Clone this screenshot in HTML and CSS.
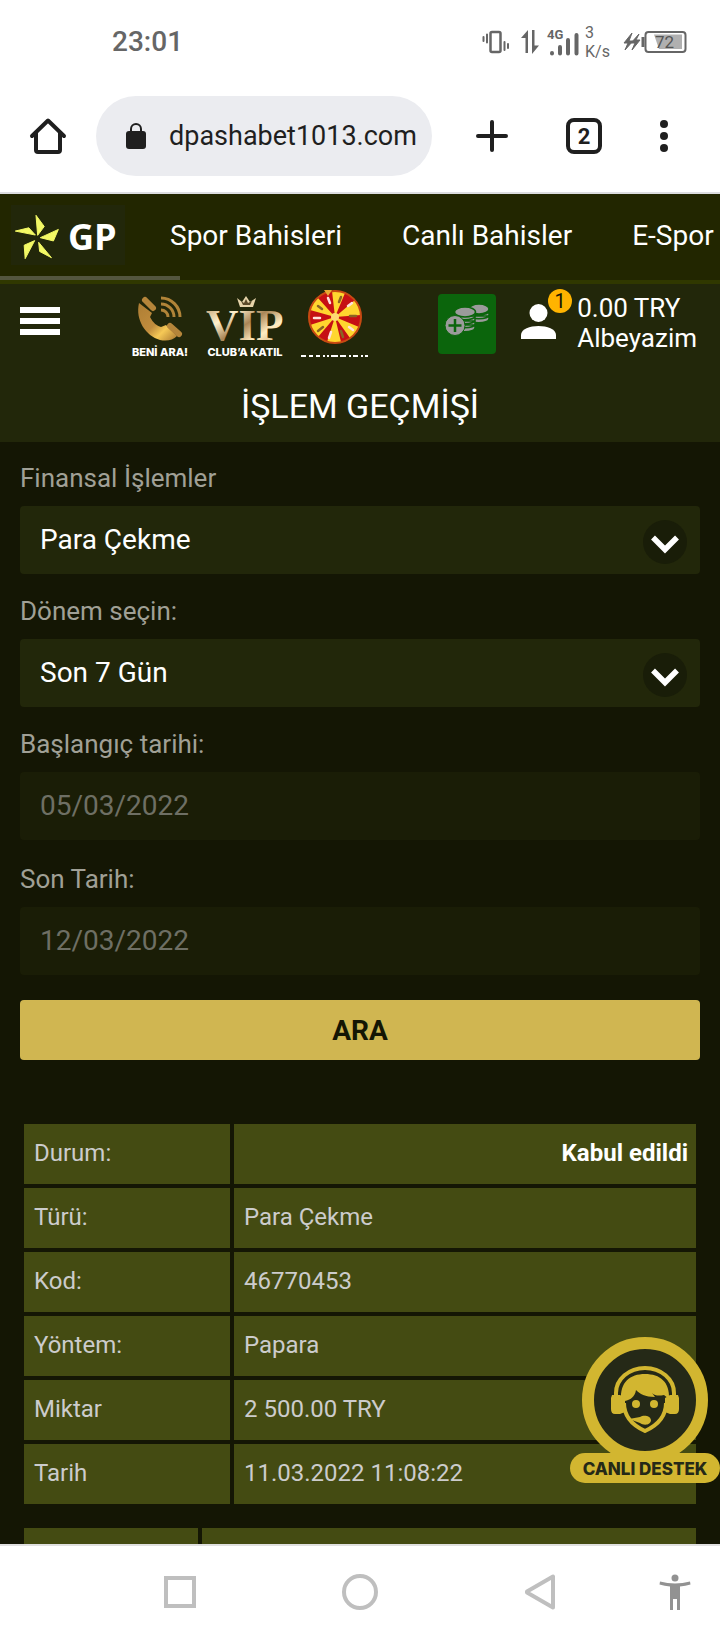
FILE: index.html
```html
<!DOCTYPE html>
<html lang="tr">
<head>
<meta charset="utf-8">
<meta name="viewport" content="width=device-width, initial-scale=1">
<title>İşlem Geçmişi</title>
<link rel="stylesheet" href="styles.css">
</head>
<body>
<div class="status-bar">
  <span class="clock">23:01</span>
  <div class="status-icons">
    <svg class="vibrate" width="28" height="24" viewBox="0 0 28 24" fill="none" stroke="#666" stroke-width="2" stroke-linecap="round">
      <rect x="8.500" y="2" width="10" height="20" rx="1.500" stroke-width="2.500"/>
      <path d="M1.500 7v4M5 4.500v8M22.500 12v8M26 14v4"/>
    </svg>
    <svg width="18" height="26" viewBox="0 0 18 26" fill="#666">
      <path d="M7 1v23H4.500V9H0zM11 1h2.500v15.500H18L11 25z"/>
    </svg>
    <svg class="signal" width="34" height="30" viewBox="0 0 34 30">
      <text x="0" y="12" class="signal-text">4G</text>
      <g stroke="#666" stroke-width="4" stroke-linecap="round"><path d="M5 26v.5M13 20v6.500M21 13v13.500M29.500 8v18.500"/></g>
    </svg>
    <span class="speed">3<br>K/s</span>
    <svg width="16" height="18" viewBox="0 0 16 18" fill="#666" stroke="#666"><path d="M8 0 0 10h4L1 17l8-9H5zM15 1 7 10h4l-3 7 8-10h-4z"/></svg>
    <svg class="battery" width="46" height="22" viewBox="0 0 46 22">
      <rect x="4.500" y="1" width="40" height="20" rx="3" fill="none" stroke="#666" stroke-width="2"/>
      <path d="M2 6v10" stroke="#666" stroke-width="3"/>
      <path d="M13 3.500h28v14.500H18z" fill="#b0b0b0"/>
      <text x="14" y="17" class="battery-text">72</text>
    </svg>
  </div>
</div>

<div class="browser-bar">
  <button class="bar-button home" type="button" aria-label="Ana sayfa">
    <svg width="36" height="36" viewBox="0 0 36 36" fill="none" stroke="#1f1f1f" stroke-width="4" stroke-linecap="round" stroke-linejoin="round"><path d="M2 18 18 2.500 34 18M6 15v17q0 2 2 2h20q2 0 2-2V15"/></svg>
  </button>
  <div class="address">
    <svg width="20" height="26" viewBox="0 0 20 26"><rect y="8" width="20" height="18" rx="3" fill="#1f1f1f"/><path d="M5 9V6a5 5 0 0 1 10 0v3" fill="none" stroke="#1f1f1f" stroke-width="2"/></svg>
    <span>dpashabet1013.com</span>
  </div>
  <button class="bar-button plus" type="button" aria-label="Yeni sekme">
    <svg width="32" height="32" viewBox="0 0 32 32" stroke="#1f1f1f" stroke-width="4" stroke-linecap="round"><path d="M2 16h28M16 2v28"/></svg>
  </button>
  <button class="bar-button tabs" type="button" aria-label="Sekmeler"><span class="tab-count">2</span></button>
  <button class="bar-button more" type="button" aria-label="Menü">
    <svg width="8" height="32" viewBox="0 0 8 32" fill="#1f1f1f"><circle cx="4" cy="4" r="4"/><circle cx="4" cy="16" r="4"/><circle cx="4" cy="28" r="4"/></svg>
  </button>
</div>

<div class="site">
  <div class="site-scroll">
    <nav class="top-nav">
      <a class="logo" href="#" aria-label="GP">
        <svg width="46" height="46" viewBox="44 86 136 140" fill="#f3f965" stroke="#f3f965" stroke-width="3"><path d="M109 90 134 124 114 151zM177 133 162 168 122 158zM156 219 120 200 117 172zM76 222 73 181 105 167zM46 138 87 128 107 150z"/></svg>
        <span class="logo-text">GP</span>
      </a>
      <a href="#">Spor Bahisleri</a>
      <a href="#">Canlı Bahisler</a>
      <a href="#">E-Spor</a>
    </nav>
    <div class="nav-track"><div class="nav-thumb"></div></div>

    <header class="header">
      <div class="header-row">
        <button class="menu-button" type="button" aria-label="Menü"><span></span><span></span><span></span></button>
        <div class="promos">
          <a class="promo call" href="#">
            <svg width="44" height="46" viewBox="0 0 44 46">
              <defs><linearGradient id="gold" x1="0" y1="0" x2="1" y2="1"><stop offset="0" stop-color="#ae7e34"/><stop offset=".5" stop-color="#c08c3d"/><stop offset=".7" stop-color="#f6c956"/><stop offset="1" stop-color="#a87631"/></linearGradient></defs>
              <path d="M1 7 14 17l-2 4q4 8 11 10l5-2 11 11q-6 6-17 4C8 40-3 24 1 7z" fill="url(#gold)"/>
              <path d="m7 4 8 8M32 30l9 8" stroke="#b5853a" stroke-width="6" stroke-linecap="round"/>
              <g fill="none" stroke="#b18438" stroke-width="3"><path d="M23 2a19 19 0 0 1 19 19M23 8a13 13 0 0 1 13 13M23 14a7 7 0 0 1 7 7"/></g>
            </svg>
            <span>BENİ ARA!</span>
          </a>
          <a class="promo vip" href="#">
            <svg width="78" height="46" viewBox="0 0 78 46">
              <defs><linearGradient id="pale" x1="0" y1="0" x2="1" y2="1"><stop offset="0" stop-color="#b38d5c"/><stop offset=".3" stop-color="#fff1cd"/><stop offset=".5" stop-color="#a98556"/><stop offset=".7" stop-color="#ffedc2"/><stop offset="1" stop-color="#b58c59"/></linearGradient></defs>
              <path d="m31 2 5 4 4-6 4 6 6-4-3 9H34z" fill="#e6d4aa"/>
              <path d="m35 5 3 2 2-4 2 4 4-2-2 4h-7z" fill="#5b4a29"/>
              <text x="0" y="44" class="vip-text">VIP</text>
            </svg>
            <span>CLUB’A KATIL</span>
          </a>
          <a class="promo wheel" href="#" aria-label="Çark">
            <svg width="70" height="69" viewBox="-35 -29 70 69">
              <circle r="26.500" fill="#c60f14"/>
              <g fill="#ffd62f"><path d="M0 0-3-26A26 26 0 0 1 10-24zM0 0 20-17A26 26 0 0 1 26-2zM0 0 24 10A26 26 0 0 1 15 21zM0 0 6 25A26 26 0 0 1-8 25zM0 0-17 20A26 26 0 0 1-25 8zM0 0-25-7A26 26 0 0 1-17-19z"/></g>
              <g stroke="#ffe0dc" stroke-width="2.500" stroke-linecap="round"><path d="m-7-19 2 5M13-11l4-3M14 10l4 3M-4 15l-2 6M-21 1h6"/></g>
              <g stroke="#8a6424" stroke-width="2.500" stroke-linecap="round"><path d="m4-15 2-5M15-1h6M6 14l2 6M-12 10l-5 4M-17-11l4 3"/></g>
              <circle r="26" fill="none" stroke="#c64a12" stroke-width="2"/>
              <circle r="4" fill="#ffd773"/><path d="M-11-27h8l-4 6z" fill="#e8a933"/>
              <path d="M-34 39h5M-26 39h4M-19 39h4M-12 39h2M-8 39h2M-4 39h7M5 39h6M14 39h2M18 39h5M26 39h2M30 39h3" stroke="#fff" stroke-width="2"/>
            </svg>
          </a>
        </div>
        <div class="account">
          <a class="deposit" href="#" aria-label="Para yatır">
            <svg width="44" height="32" viewBox="0 0 44 32">
              <g fill="#9b9b9b" stroke="#0b650c" stroke-width="1.500">
                <path d="M24 12v3c0 5 19 5 20 0v-3zM24 8v3c0 5 19 5 20 0V8zM24 4v3c0 5 19 5 20 0V4z"/>
                <ellipse cx="34" cy="5" rx="10" ry="5"/>
                <path d="M10 21v3c0 5 19 5 20 0v-3zM10 17v3c0 5 19 5 20 0v-3zM10 12v4c0 5 19 5 20 0v-4zM10 8v4c0 5 19 5 20 0V8z"/>
                <ellipse cx="20" cy="8" rx="10.500" ry="5"/>
              </g>
              <circle cx="10" cy="21.500" r="10" fill="#9b9b9b" stroke="#0b650c"/><path d="M3.500 21.500h13M10 15v13" stroke="#0b650c" stroke-width="2.500"/>
            </svg>
          </a>
          <a class="user" href="#" aria-label="Hesabım">
            <svg width="35" height="36" viewBox="0 0 35 36" fill="#fff"><circle cx="17.500" cy="9" r="9"/><path d="M0 35v-4C0 25 9 22 17.500 22S35 25 35 31v4z"/></svg>
            <span class="badge">1</span>
          </a>
          <a class="balance" href="#">0.00 TRY<br>Albeyazim</a>
        </div>
      </div>
      <h1>İŞLEM GEÇMİŞİ</h1>
    </header>

    <main class="content">
      <form class="filters">
        <div class="field">
          <label for="kind">Finansal İşlemler</label>
          <div class="select-box">
            <select id="kind"><option>Para Çekme</option></select>
            <svg class="chevron" width="44" height="44" viewBox="0 0 44 44"><circle cx="22" cy="22" r="22" fill="#191d08"/><path d="m10 17.500 12 12 12-12" fill="none" stroke="#fff" stroke-width="5.500"/></svg>
          </div>
        </div>
        <div class="field">
          <label for="period">Dönem seçin:</label>
          <div class="select-box">
            <select id="period"><option>Son 7 Gün</option></select>
            <svg class="chevron" width="44" height="44" viewBox="0 0 44 44"><circle cx="22" cy="22" r="22" fill="#191d08"/><path d="m10 17.500 12 12 12-12" fill="none" stroke="#fff" stroke-width="5.500"/></svg>
          </div>
        </div>
        <div class="field">
          <label for="start">Başlangıç tarihi:</label>
          <input id="start" type="text" value="05/03/2022" disabled>
        </div>
        <div class="field field-last">
          <label for="end">Son Tarih:</label>
          <input id="end" type="text" value="12/03/2022" disabled>
        </div>
        <button class="search" type="button">ARA</button>
      </form>

      <table class="record">
        <tr><th scope="row">Durum:</th><td class="state">Kabul edildi</td></tr>
        <tr><th scope="row">Türü:</th><td>Para Çekme</td></tr>
        <tr><th scope="row">Kod:</th><td>46770453</td></tr>
        <tr><th scope="row">Yöntem:</th><td>Papara</td></tr>
        <tr><th scope="row">Miktar</th><td>2 500.00 TRY</td></tr>
        <tr><th scope="row">Tarih</th><td>11.03.2022 11:08:22</td></tr>
      </table>
      <table class="record record-next">
        <tr><th scope="row"></th><td></td></tr>
      </table>
    </main>
  </div>

  <a class="support" href="#">
    <svg width="126" height="126" viewBox="0 0 126 126">
      <circle cx="63" cy="63" r="57" fill="#252917" stroke="#d2b630" stroke-width="12"/>
      <g fill="none" stroke="#d2b630">
        <path d="M34 61V56a29 25 0 0 1 58 0v5" stroke-width="4"/>
        <path d="M42 66c0 14 10 23 21 28 11-5 21-14 21-28" stroke-width="4" stroke-linejoin="round"/>
      </g>
      <path d="M30 58h8l5 3v14l-5 2h-5q-4 0-4-5V61zM96 58h-8l-5 3v14l5 2h5q4 0 4-5V61z" fill="#d2b630"/>
      <path d="M39 63c-1-18 9-26 24-26s25 8 24 25l-5-4c-5 1-9 1-12-2l3 4c-10 0-15-3-19-7-1 7-6 10-11 11z" fill="#d2b630"/>
      <circle cx="54" cy="67" r="4" fill="#d2b630"/><circle cx="72" cy="67" r="4" fill="#d2b630"/>
      <path d="m47 82 11-2c3-2 10-2 11 3 0 5-7 6-11 3z" fill="#d2b630"/>
    </svg>
    <span>CANLI DESTEK</span>
  </a>
</div>

<div class="system-nav">
  <button type="button" aria-label="Son uygulamalar"><svg width="32" height="32" viewBox="0 0 32 32"><path d="M2 2h28v28H2z" fill="none" stroke="#bfbfbf" stroke-width="4"/></svg></button>
  <button type="button" aria-label="Ana ekran"><svg width="36" height="36" viewBox="0 0 36 36"><circle cx="18" cy="18" r="16" fill="none" stroke="#bfbfbf" stroke-width="4"/></svg></button>
  <button type="button" aria-label="Geri"><svg width="30" height="36" viewBox="0 0 30 36"><path d="M28 2.500v31L2 18.500v-1z" fill="none" stroke="#bfbfbf" stroke-width="4" stroke-linejoin="round"/></svg></button>
  <button type="button" aria-label="Erişilebilirlik"><svg width="32" height="36" viewBox="0 0 32 36" fill="#929292"><circle cx="16" cy="4" r="3.500"/><path d="M1 7.500q15 4 30 0l.5 3q-5 1.500-10.500 2V36h-3V25h-4v11h-3V12.500Q5.500 12 .5 10.500z"/></svg></button>
</div>
</body>
</html>
```

FILE: styles.css
```css
* {
  box-sizing: border-box;
}

body {
  margin: 0;
  height: 100vh;
  display: flex;
  flex-direction: column;
  background: #fff;
  font-family: Roboto, "Noto Sans", sans-serif;
  color: #fff;
}

a {
  color: inherit;
  text-decoration: none;
}

svg {
  display: block;
  flex: none;
  overflow: visible;
}

button {
  border: 0;
  padding: 0;
  background: none;
  font-family: inherit;
}

/* Phone status bar */
.status-bar {
  flex: none;
  height: 80px;
  padding: 3px 33px 0 112px;
  display: flex;
  align-items: center;
  justify-content: space-between;
  color: #666;
}

.clock {
  font-size: 28px;
  font-weight: 500;
  line-height: 32px;
}

.status-icons {
  display: flex;
  align-items: center;
}

.vibrate {
  margin-right: 11px;
}

.signal {
  margin: 0 4px 0 8px;
}

.signal-text {
  font: 700 13px Roboto, sans-serif;
  fill: #666;
}

.speed {
  width: 39px;
  font-size: 16px;
  line-height: 19px;
}

.battery {
  margin-left: 1px;
}

.battery-text {
  font: 400 17px Roboto, sans-serif;
  fill: #555;
}

/* Browser toolbar */
.browser-bar {
  flex: none;
  height: 114px;
  padding-right: 8px;
  border-bottom: 2px solid #dcdde0;
  display: flex;
  align-items: center;
}

.bar-button {
  height: 80px;
  display: flex;
  align-items: center;
  justify-content: center;
}

.home,
.more {
  width: 96px;
}

.plus {
  width: 120px;
}

.tabs {
  width: 64px;
}

.address {
  flex: 1;
  min-width: 0;
  height: 80px;
  padding-left: 30px;
  border-radius: 40px;
  background: #ebecf0;
  display: flex;
  align-items: center;
  gap: 23px;
  color: #1f1f1f;
  font-size: 27px;
}

.tab-count {
  width: 36px;
  height: 36px;
  border: 4px solid #1f1f1f;
  border-radius: 8px;
  color: #1f1f1f;
  font-size: 22px;
  font-weight: 700;
  line-height: 29px;
  text-align: center;
}

/* Site */
.site {
  flex: 1;
  min-height: 0;
  position: relative;
  background: #141604;
  border-bottom: 2px solid #e0e0e0;
}

.site-scroll {
  height: 100%;
  overflow-y: auto;
  scrollbar-width: none;
}

.top-nav {
  height: 82px;
  padding-left: 11px;
  background: #222600;
  display: flex;
  align-items: center;
  gap: 60px;
  overflow: hidden;
  white-space: nowrap;
  font-size: 28px;
}

.logo {
  width: 114px;
  height: 60px;
  margin-right: -15px;
  padding: 4px 0 0 3px;
  background: #22270a;
  display: flex;
  align-items: center;
  gap: 8px;
}

.logo-text {
  font-family: "Open Sans", sans-serif;
  font-size: 36px;
  font-weight: 700;
  line-height: 48px;
}

.nav-track {
  height: 8px;
  background: #222600;
  border-bottom: 4px solid #303800;
}

.nav-thumb {
  width: 25%;
  height: 4px;
  background: #54563f;
}

.header {
  background: #22270a;
}

.header-row {
  height: 80px;
  padding: 0 23px 0 20px;
  display: flex;
  align-items: center;
}

.menu-button {
  width: 40px;
  margin-right: 70px;
  padding-bottom: 6px;
  display: flex;
  flex-direction: column;
  gap: 5px;
}

.menu-button span {
  width: 40px;
  height: 6px;
  background: #fff;
}

.promos {
  display: flex;
  align-items: flex-start;
  gap: 16px;
}

.promo {
  display: flex;
  flex-direction: column;
  align-items: center;
  gap: 2px;
  padding-top: 8px;
  font-family: Inter, sans-serif;
  font-size: 11px;
  font-weight: 800;
  line-height: 16px;
  white-space: nowrap;
}

.promo.call {
  width: 60px;
}

.promo.vip {
  width: 78px;
}

.promo.wheel {
  padding-top: 0;
}

.vip-text {
  font: 700 45px "Liberation Serif", serif;
  fill: url(#pale);
}

.account {
  margin-left: auto;
  display: flex;
  align-items: center;
}

.deposit {
  width: 58px;
  height: 60px;
  padding: 10px 7px;
  border-radius: 4px;
  background: #0b650c;
}

.user {
  position: relative;
  margin: 0 21px 4px 25px;
}

.badge {
  position: absolute;
  top: -15px;
  right: -16px;
  width: 24px;
  height: 24px;
  border-radius: 12px;
  background: #ffb400;
  color: #141604;
  font-size: 20px;
  line-height: 24px;
  text-align: center;
}

.balance {
  padding-bottom: 2px;
  font-size: 26px;
  line-height: 30px;
}

h1 {
  margin: 0;
  padding: 22px 20px 16px;
  font-size: 34px;
  font-weight: 400;
  line-height: 40px;
  text-align: center;
}

/* Filters */
.content {
  padding: 21px 20px 0;
}

.filters {
  display: flex;
  flex-direction: column;
  gap: 22px;
}

.field {
  display: flex;
  flex-direction: column;
  gap: 13px;
}

.field-last {
  padding: 2px 0;
}

.field label {
  color: #a0a096;
  font-size: 26px;
  line-height: 30px;
}

.select-box {
  position: relative;
}

.field select,
.field input {
  display: block;
  width: 100%;
  height: 68px;
  margin: 0;
  padding: 0 20px 2px;
  border: 0;
  border-radius: 4px;
  background: #22270a;
  color: #fff;
  font-family: inherit;
  font-size: 28px;
  appearance: none;
  opacity: 1;
}

.field input:disabled {
  background: #1a1d06;
  color: #6e6f64;
}

.chevron {
  position: absolute;
  top: 14px;
  right: 13px;
  pointer-events: none;
}

.search {
  height: 60px;
  margin-top: 1px;
  border-radius: 4px;
  background: #d0b651;
  color: #141604;
  font-size: 28px;
  font-weight: 700;
}

/* Transaction records */
.record {
  width: 100%;
  margin-top: 60px;
  border-spacing: 4px;
  table-layout: fixed;
  color: #ccc;
  font-size: 24px;
}

.record th,
.record td {
  height: 60px;
  padding: 0 10px 2px;
  background: #444b12;
  font-weight: 400;
  text-align: left;
}

.record th {
  width: 206px;
}

.record .state {
  padding-right: 8px;
  color: #fff;
  font-weight: 700;
  text-align: right;
}

.record-next {
  margin-top: 16px;
}

.record-next th {
  width: 174px;
}

/* Live support */
.support {
  position: absolute;
  right: 0;
  bottom: 61px;
  width: 150px;
  display: flex;
  flex-direction: column;
  align-items: center;
}

.support span {
  width: 150px;
  height: 30px;
  margin-top: -10px;
  border-radius: 15px;
  background: #d2b630;
  color: #252917;
  font-family: Inter, sans-serif;
  font-size: 17px;
  font-weight: 800;
  line-height: 32px;
  text-align: center;
}

/* System navigation */
.system-nav {
  flex: none;
  height: 94px;
  padding: 0 0 2px 12.5%;
  display: grid;
  grid-template-columns: 2fr 2fr 2fr 1fr;
}

.system-nav button {
  display: flex;
  align-items: center;
  justify-content: center;
}
```
